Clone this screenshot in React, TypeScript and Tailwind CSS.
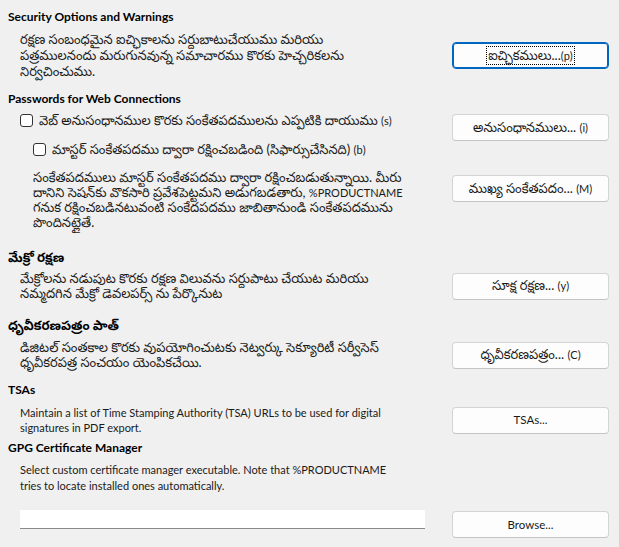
const font = { fontFamily: 'Lato, "Noto Sans", "Noto Sans Telugu", sans-serif' }

function L({ children }: { children: React.ReactNode }) {
  // latin bits inside telugu text are smaller
  return <span className="text-[11px] leading-none">{children}</span>
}

function Btn({ label, focused = false, className = '', te = true }: { label: React.ReactNode; focused?: boolean; className?: string; te?: boolean }) {
  return (
    <button
      className={
        'h-[27px] w-[157px] shrink-0 rounded-[4px] bg-[#fdfdfd] text-[#1a1a1a] flex items-center justify-center ' +
        (te ? 'text-[13px] ' : 'text-[11.5px] ') +
        (focused ? 'border border-[#0067c0] shadow-[inset_0_0_0_1px_#0067c0]' : 'border border-[#d4d4d4] border-b-[#c4c4c4]') +
        ' ' +
        className
      }
    >
      <span className={focused ? 'outline outline-1 outline-dotted outline-black px-[1px] leading-[17px]' : ''}>{label}</span>
    </button>
  )
}

function Heading({ children, className = '' }: { children: React.ReactNode; className?: string }) {
  return <div className={'pl-2 font-bold leading-[16px] text-black ' + className}>{children}</div>
}

function Checkbox({ label, className = '' }: { label: React.ReactNode; className?: string }) {
  return (
    <div className={'flex items-center gap-[6px] text-[13px] leading-[16px] ' + className}>
      <span className="h-[13px] w-[13px] rounded-[3px] border border-[#333] bg-white shrink-0" />
      <span>{label}</span>
    </div>
  )
}

export default function App() {
  return (
    <div className="h-[547px] w-[619px] overflow-hidden bg-[#f0f0f0] text-[#1a1a1a]" style={font}>
      {/* security options */}
      <Heading className="pt-[9px] text-[12px]">Security Options and Warnings</Heading>
      <div className="mt-[6px] flex items-center pl-5 pr-[10px]">
        <p className="flex-1 text-[13px] leading-[16px]">
          రక్షణ సంబంధమైన ఐచ్ఛికాలను సర్దుబాటుచేయుము మరియు<br />
          పత్రములనందు మరుగునవున్న సమాచారము కొరకు హెచ్చరికలను<br />
          నిర్వచించుము.
        </p>
        <Btn label={<>ఐచ్ఛికములు...<L>(p)</L></>} focused />
      </div>

      {/* passwords */}
      <Heading className="mt-[12px] text-[12px]">Passwords for Web Connections</Heading>
      <div className="flex pl-5 pr-[10px]">
        <div className="flex-1">
          <Checkbox className="mt-[5px]" label={<>వెబ్ అనుసంధానముల కొరకు సంకేతపదములను ఎప్పటికి దాయుము <L>(s)</L></>} />
          <Checkbox className="mt-[13px] pl-[13px]" label={<>మాస్టర్ సంకేతపదము ద్వారా రక్షించబడింది (సిఫార్సుచేసినది) <L>(b)</L></>} />
          <p className="mt-[13px] pl-[13px] text-[13px] leading-[15px]">
            సంకేతపదములు మాస్టర్ సంకేతపదము ద్వారా రక్షించబడుతున్నాయి. మీరు<br />
            దానిని సెషన్‌కు వొకసారి ప్రవేశపెట్టమని అడుగబడతారు, <L>%PRODUCTNAME</L><br />
            గనుక రక్షించబడినటువంటి సంకేదపదము జాబితానుండి సంకేతపదమును<br />
            పొందినట్లైతే.
          </p>
        </div>
        <div className="flex flex-col">
          <Btn className="mt-[7px]" label={<>అనుసంధానములు... <L>(i)</L></>} />
          <Btn className="mt-[34px]" label={<>ముఖ్య సంకేతపదం... <L>(M)</L></>} />
        </div>
      </div>

      {/* macro */}
      <Heading className="mt-[19px] text-[13px]">మేక్రో రక్షణ</Heading>
      <div className="mt-[6px] flex items-center pl-5 pr-[10px]">
        <p className="flex-1 text-[13px] leading-[15px]">
          మేక్రోలను నడుపుట కొరకు రక్షణ విలువను సర్దుపాటు చేయుట మరియు<br />
          నమ్మదగిన మేక్రో డెవలపర్స్ ను పేర్కొనుట
        </p>
        <Btn label={<>సూక్ష రక్షణ... <L>(y)</L></>} />
      </div>

      {/* certificate path */}
      <Heading className="mt-[16px] text-[13px]">ధృవీకరణపత్రం పాత్</Heading>
      <div className="mt-[7px] flex items-center pl-5 pr-[10px]">
        <p className="flex-1 text-[13px] leading-[15px]">
          డిజిటల్ సంతకాల కొరకు వుపయోగించుటకు నెట్వర్కు సెక్యూరిటీ సర్వీసెస్<br />
          ధృవీకరపత్ర సంచయం యెంపికచేయి.
        </p>
        <Btn label={<>ధృవీకరణపత్రం... <L>(C)</L></>} />
      </div>

      {/* TSAs */}
      <Heading className="mt-[12px] text-[12px]">TSAs</Heading>
      <div className="mt-[7px] flex items-center pl-5 pr-[10px]">
        <p className="flex-1 text-[11px] leading-[15px]">
          Maintain a list of Time Stamping Authority (TSA) URLs to be used for digital<br />
          signatures in PDF export.
        </p>
        <Btn te={false} label="TSAs..." />
      </div>

      {/* GPG */}
      <Heading className="mt-[5px] text-[12px]">GPG Certificate Manager</Heading>
      <p className="mt-[6px] pl-5 text-[11px] leading-[16px]">
        Select custom certificate manager executable. Note that %PRODUCTNAME<br />
        tries to locate installed ones automatically.
      </p>
      <div className="mt-[16px] flex items-start pl-5 pr-[10px]">
        <div className="h-[19px] w-[405px] border-b border-[#8a8a8a] bg-white" />
        <div className="flex-1" />
        <Btn te={false} className="mt-[1px]" label="Browse..." />
      </div>
    </div>
  )
}
